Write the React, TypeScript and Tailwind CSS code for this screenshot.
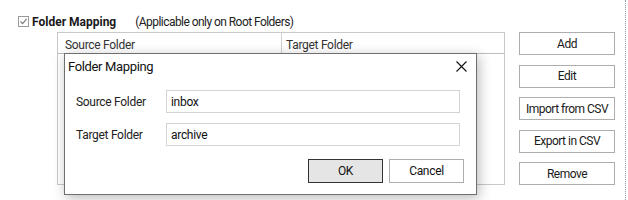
const buttons = ['Add', 'Edit', 'Import from CSV', 'Export in CSV', 'Remove'];

function SideButton({ label }: { label: string }) {
  return (
    <button className="flex h-[23px] w-[96px] items-center justify-center border border-[#adadad] bg-white text-[12px] tracking-[-0.5px] text-[#1a1a1a]">
      {label}
    </button>
  );
}

function Field({ label, value }: { label: string; value: string }) {
  return (
    <div className="flex items-center">
      <span className="w-[90px] text-[12px] text-[#222]">{label}</span>
      <div className="flex h-[23px] w-[294px] items-center border border-[#d4d4d4] bg-white px-[4px] text-[12px] text-[#111]">
        {value}
      </div>
    </div>
  );
}

function MappingDialog() {
  return (
    <div className="absolute left-[64px] top-[53px] flex h-[142px] w-[413px] flex-col border border-[#6f6f6f] bg-white shadow-[2px_3px_12px_rgba(0,0,0,0.28)]">
      <div className="flex h-[22px] items-center justify-between pl-[3px] pr-[9px] pt-[3px]">
        <span className="text-[13px] tracking-[-0.35px] text-[#111]">Folder Mapping</span>
        <svg width="11" height="11" viewBox="0 0 11 11">
          <path d="M0.5 0.5L10.5 10.5M10.5 0.5L0.5 10.5" stroke="#111" strokeWidth="1.1" />
        </svg>
      </div>
      <div className="mt-[14px] flex flex-col gap-[10px] pl-[11px]">
        <Field label="Source Folder" value="inbox" />
        <Field label="Target Folder" value="archive" />
      </div>
      <div className="mt-[13px] flex justify-end gap-[6px] pr-[12px]">
        <button className="flex h-[24px] w-[75px] items-center justify-center border border-[#333] bg-[#e5e5e5] text-[12px] text-[#111]">
          OK
        </button>
        <button className="flex h-[24px] w-[75px] items-center justify-center border border-[#adadad] bg-white text-[12px] text-[#111]">
          Cancel
        </button>
      </div>
    </div>
  );
}

export default function App() {
  return (
    <div className="relative h-[200px] w-[628px] overflow-hidden bg-white font-['Roboto',sans-serif] tracking-[-0.3px]">
      <div className="box-content flex h-[19px] items-center pl-[18px] pt-[12px]">
        <div className="flex h-[11px] w-[11px] items-center justify-center border border-[#9a9a9a] bg-white">
          <svg width="9" height="9" viewBox="0 0 9 9">
            <path d="M1.5 4.5L3.6 6.6L7.6 1.8" fill="none" stroke="#777" strokeWidth="1.1" />
          </svg>
        </div>
        <span className="ml-[3px] text-[12px] font-bold tracking-normal text-[#1a1a1a]">Folder Mapping</span>
        <span className="ml-[19px] text-[12px] tracking-[-0.55px] text-[#222]">(Applicable only on Root Folders)</span>
      </div>

      <div className="ml-[57px] mt-[1px] flex">
        <div className="h-[153px] w-[448px] border border-[#c9c9c9] bg-white">
          <div className="flex h-[21px] border-b border-[#bdbdbd] text-[12px] text-[#333]">
            <div className="w-[224px] border-r border-[#d0d0d0] pl-[7px] pt-[3px]">Source Folder</div>
            <div className="pl-[4px] pt-[3px]">Target Folder</div>
          </div>
        </div>
        <div className="ml-[14px] flex flex-col gap-[9.5px]">
          {buttons.map((b) => (
            <SideButton key={b} label={b} />
          ))}
        </div>
      </div>

      <div className="absolute right-[2px] top-0 h-[200px] border-l border-dotted border-[#8d99ae]" />

      <MappingDialog />
    </div>
  );
}
